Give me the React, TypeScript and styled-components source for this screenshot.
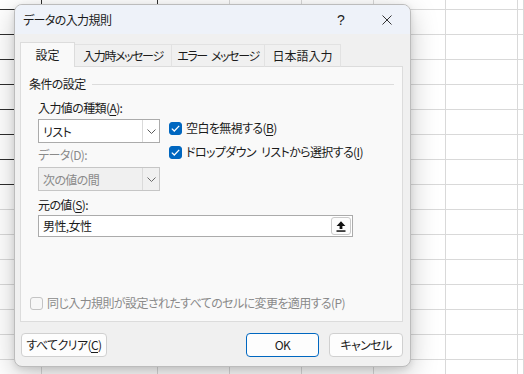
import styled, { createGlobalStyle } from "styled-components";

const GlobalStyle = createGlobalStyle`
  html, body {
    margin: 0;
    padding: 0;
  }
  body {
    width: 524px;
    height: 374px;
    overflow: hidden;
    background: #ffffff;
    font-family: "Noto Sans CJK JP", "Noto Sans", sans-serif;
    font-size: 12px;
    color: #1b1b1b;
    font-feature-settings: "palt";
    letter-spacing: -0.6px;
    word-spacing: 3px;
  }
  u {
    text-underline-offset: 2px;
  }
`;

const Sheet = styled.div`
  position: relative;
  width: 524px;
  height: 374px;
  display: flex;
  overflow: hidden;
`;

const SheetColumn = styled.div<{ $w: number; $ruled?: boolean }>`
  flex: 0 0 ${(p) => p.$w}px;
  height: 100%;
  box-sizing: border-box;
  background-image: ${(p) =>
    p.$ruled
      ? "repeating-linear-gradient(to bottom, #2f2f2f 0 1px, transparent 1px 25px), linear-gradient(to bottom, #2f2f2f 185px, #d9d9d9 185px), linear-gradient(to bottom, #d9d9d9 1px, transparent 1px)"
      : "linear-gradient(to bottom, #d9d9d9 100%, #d9d9d9 100%), linear-gradient(to bottom, #d9d9d9 1px, transparent 1px)"};
  background-size: ${(p) =>
    p.$ruled ? "100% 176px, 1px 100%, 100% 25px" : "1px 100%, 100% 25px"};
  background-position: ${(p) =>
    p.$ruled ? "0 9px, right 0 top 0, 0 9px" : "right 0 top 0, 0 9px"};
  background-repeat: ${(p) =>
    p.$ruled ? "no-repeat, no-repeat, repeat-y" : "no-repeat, repeat-y"};
`;

const Dialog = styled.div`
  position: absolute;
  left: 14px;
  top: 4px;
  width: 397px;
  height: 363px;
  box-sizing: border-box;
  border: 1px solid #bcbcbc;
  border-radius: 8px;
  background: #f0f0f0;
  box-shadow: 0 8px 28px rgba(0, 0, 0, 0.22), 0 2px 6px rgba(0, 0, 0, 0.1);
  display: flex;
  flex-direction: column;
  overflow: hidden;
`;

const TitleBar = styled.div`
  height: 29px;
  flex: 0 0 29px;
  background: #eef2f9;
  display: flex;
  align-items: center;
  padding-left: 8px;
`;

const TitleText = styled.div`
  flex: 1;
  font-size: 12px;
  line-height: 16px;
  color: #1b1b1b;
`;

const TitleButton = styled.div`
  width: 46px;
  height: 29px;
  display: flex;
  align-items: center;
  justify-content: center;
  font-family: "Liberation Sans", "Noto Sans", sans-serif;
  font-size: 14px;
  letter-spacing: 0;
  color: #222;
`;

const Content = styled.div`
  padding: 8px 7px 0 5px;
  display: flex;
  flex-direction: column;
`;

const TabRow = styled.div`
  display: flex;
  align-items: flex-end;
  height: 25px;
  position: relative;
  z-index: 1;
  margin-bottom: -1px;
`;

const Tab = styled.div<{ $w: number; $active?: boolean; $tight?: boolean }>`
  width: ${(p) => p.$w}px;
  height: ${(p) => (p.$active ? 25 : 23)}px;
  box-sizing: border-box;
  border: 1px solid ${(p) => (p.$active ? "#dcdcdc" : "#e2e2e2")};
  border-bottom: ${(p) => (p.$active ? "none" : "1px solid #dcdcdc")};
  border-left: ${(p) => (p.$active ? "1px solid #dcdcdc" : "none")};
  background: ${(p) => (p.$active ? "#f9f9f9" : "#f0f0f0")};
  display: flex;
  align-items: center;
  justify-content: center;
  padding-bottom: ${(p) => (p.$active ? 1 : 0)}px;
  line-height: 16px;
  letter-spacing: ${(p) => (p.$tight ? "-1.4px" : "0")};
  white-space: nowrap;
`;

const Panel = styled.div`
  height: 256px;
  box-sizing: border-box;
  border: 1px solid #dcdcdc;
  background: #f9f9f9;
  padding: 9px 8px 10px 8px;
  display: flex;
  flex-direction: column;
`;

const GroupHeader = styled.div`
  display: flex;
  align-items: center;
  line-height: 16px;
`;

const GroupRule = styled.div`
  flex: 1;
  height: 1px;
  background: #dcdcdc;
  margin: 1px 0 0 6px;
`;

const GroupBody = styled.div`
  padding-left: 9px;
  margin-top: 8px;
  display: flex;
  flex-direction: column;
`;

const FieldRow = styled.div`
  display: flex;
  align-items: flex-start;
`;

const LeftCol = styled.div`
  width: 122px;
  display: flex;
  flex-direction: column;
`;

const RightCol = styled.div`
  margin-left: 9px;
  padding-top: 20px;
  display: flex;
  flex-direction: column;
  gap: 8px;
`;

const FieldLabel = styled.div<{ $disabled?: boolean; $gap?: number }>`
  line-height: 16px;
  margin-top: ${(p) => p.$gap ?? 0}px;
  color: ${(p) => (p.$disabled ? "#8a8a8a" : "#1b1b1b")};
  white-space: nowrap;
`;

const Combo = styled.div<{ $disabled?: boolean; $gap?: number }>`
  width: 122px;
  height: 24px;
  margin-top: ${(p) => p.$gap ?? 0}px;
  box-sizing: border-box;
  border: 1px solid ${(p) => (p.$disabled ? "#c6c6c6" : "#ababab")};
  background: ${(p) => (p.$disabled ? "#f0f0f0" : "#ffffff")};
  color: ${(p) => (p.$disabled ? "#8a8a8a" : "#1b1b1b")};
  display: flex;
  align-items: stretch;
`;

const ComboText = styled.div`
  flex: 1;
  padding-left: 4px;
  display: flex;
  align-items: center;
`;

const DropButton = styled.div`
  width: 17px;
  box-sizing: border-box;
  border-left: 1px solid #dadada;
  display: flex;
  align-items: center;
  justify-content: center;
`;

const CheckRow = styled.div<{ $disabled?: boolean }>`
  display: flex;
  align-items: center;
  line-height: 16px;
  gap: 4px;
  color: ${(p) => (p.$disabled ? "#8a8a8a" : "#1b1b1b")};
  white-space: nowrap;
`;

const CheckBox = styled.div<{ $checked?: boolean }>`
  width: 13px;
  height: 13px;
  box-sizing: border-box;
  border-radius: 3px;
  background: ${(p) => (p.$checked ? "#0067c0" : "#f7f7f7")};
  border: 1px solid ${(p) => (p.$checked ? "#0067c0" : "#c4c4c4")};
  display: flex;
  align-items: center;
  justify-content: center;
`;

const SourceBox = styled.div`
  width: 315px;
  height: 22px;
  margin-top: 2px;
  box-sizing: border-box;
  border: 1px solid #ababab;
  background: #ffffff;
  display: flex;
  align-items: center;
  padding: 0 1px 0 4px;
`;

const SourceText = styled.div`
  flex: 1;
  line-height: 16px;
`;

const RefButton = styled.div`
  width: 20px;
  height: 18px;
  box-sizing: border-box;
  border: 1px solid #cacaca;
  border-radius: 3px;
  background: #fdfdfd;
  display: flex;
  align-items: center;
  justify-content: center;
`;

const ApplyRow = styled(CheckRow)`
  margin-top: auto;
  padding-left: 1px;
`;

const Footer = styled.div`
  margin-top: 11px;
  padding-left: 1px;
  display: flex;
  gap: 10px;
`;

const Spacer = styled.div`
  flex: 1;
`;

const PushButton = styled.div<{ $w: number; $primary?: boolean }>`
  width: ${(p) => p.$w}px;
  height: 24px;
  box-sizing: border-box;
  border: 1px solid ${(p) => (p.$primary ? "#0067c0" : "#d0d0d0")};
  border-radius: 4px;
  background: #fdfdfd;
  display: flex;
  align-items: center;
  justify-content: center;
  line-height: 16px;
  white-space: nowrap;
`;

const Chevron = ({ color }: { color: string }) => (
  <svg width="9" height="5" viewBox="0 0 9 5">
    <polyline points="0.5,0.5 4.5,4.5 8.5,0.5" fill="none" stroke={color} strokeWidth="1" />
  </svg>
);

const Tick = () => (
  <svg width="9" height="7" viewBox="0 0 9 7">
    <polyline points="0.8,3.6 3.3,6 8.2,0.9" fill="none" stroke="#ffffff" strokeWidth="1.3" />
  </svg>
);

const UploadIcon = () => (
  <svg width="10" height="11" viewBox="0 0 10 11">
    <path d="M5 0.3 L9.4 5 H6.4 V8 H3.6 V5 H0.6 Z" fill="#111" />
    <rect x="0.5" y="9.3" width="9" height="1.5" fill="#111" />
  </svg>
);

const CloseIcon = () => (
  <svg width="10" height="10" viewBox="0 0 10 10">
    <path d="M0.5 0.5 L9.5 9.5 M9.5 0.5 L0.5 9.5" stroke="#333" strokeWidth="1" />
  </svg>
);

const columns = [
  { w: 42, ruled: true },
  { w: 116, ruled: true },
  { w: 72 },
  { w: 72 },
  { w: 72 },
  { w: 72 },
  { w: 72 },
  { w: 6 },
];

const tabs = [
  { label: "設定", w: 55, active: true },
  { label: "入力時メッセージ", w: 97, tight: true },
  { label: "エラー メッセージ", w: 93, tight: true },
  { label: "日本語入力", w: 76 },
];

const App = () => {
  return (
    <>
      <GlobalStyle />
      <Sheet>
        {columns.map((c, i) => (
          <SheetColumn key={i} $w={c.w} $ruled={c.ruled} />
        ))}

        <Dialog>
          <TitleBar>
            <TitleText>データの入力規則</TitleText>
            <TitleButton>?</TitleButton>
            <TitleButton>
              <CloseIcon />
            </TitleButton>
          </TitleBar>

          <Content>
            <TabRow>
              {tabs.map((t) => (
                <Tab key={t.label} $w={t.w} $active={t.active} $tight={t.tight}>
                  {t.label}
                </Tab>
              ))}
            </TabRow>

            <Panel>
              <GroupHeader>
                <span>条件の設定</span>
                <GroupRule />
              </GroupHeader>

              <GroupBody>
                <FieldRow>
                  <LeftCol>
                    <FieldLabel>
                      入力値の種類(<u>A</u>):
                    </FieldLabel>
                    <Combo $gap={3}>
                      <ComboText>リスト</ComboText>
                      <DropButton>
                        <Chevron color="#5a5a5a" />
                      </DropButton>
                    </Combo>
                    <FieldLabel $disabled $gap={4}>
                      データ(D):
                    </FieldLabel>
                    <Combo $disabled $gap={4}>
                      <ComboText>次の値の間</ComboText>
                      <DropButton>
                        <Chevron color="#6a6a6a" />
                      </DropButton>
                    </Combo>
                  </LeftCol>

                  <RightCol>
                    <CheckRow>
                      <CheckBox $checked>
                        <Tick />
                      </CheckBox>
                      <span>
                        空白を無視する(<u>B</u>)
                      </span>
                    </CheckRow>
                    <CheckRow>
                      <CheckBox $checked>
                        <Tick />
                      </CheckBox>
                      <span>
                        ドロップダウン リストから選択する(<u>I</u>)
                      </span>
                    </CheckRow>
                  </RightCol>
                </FieldRow>

                <FieldLabel $gap={6}>
                  元の値(<u>S</u>):
                </FieldLabel>
                <SourceBox>
                  <SourceText>男性,女性</SourceText>
                  <RefButton>
                    <UploadIcon />
                  </RefButton>
                </SourceBox>
              </GroupBody>

              <ApplyRow $disabled>
                <CheckBox />
                <span>同じ入力規則が設定されたすべてのセルに変更を適用する(P)</span>
              </ApplyRow>
            </Panel>

            <Footer>
              <PushButton $w={86}>
                すべてクリア(<u>C</u>)
              </PushButton>
              <Spacer />
              <PushButton $w={73} $primary>
                OK
              </PushButton>
              <PushButton $w={74}>キャンセル</PushButton>
            </Footer>
          </Content>
        </Dialog>
      </Sheet>
    </>
  );
};

export default App;
